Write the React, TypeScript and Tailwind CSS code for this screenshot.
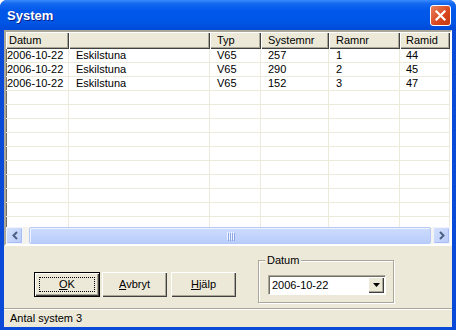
import React from 'react';

const FONT = { fontFamily: '"Liberation Sans", Arial, sans-serif' };

type Col = { title: string; w: string; pad: string };

const cols: Col[] = [
  { title: 'Datum', w: 'w-[63px]', pad: 'pl-[1px]' },
  { title: '', w: 'w-[141px]', pad: 'pl-[7px]' },
  { title: 'Typ', w: 'w-[51px]', pad: 'pl-[7px]' },
  { title: 'Systemnr', w: 'w-[68px]', pad: 'pl-[7px]' },
  { title: 'Ramnr', w: 'w-[71px]', pad: 'pl-[7px]' },
  { title: 'Ramid', w: 'w-[50px]', pad: 'pl-[6px]' },
];

const rows = [
  ['2006-10-22', 'Eskilstuna', 'V65', '257', '1', '44'],
  ['2006-10-22', 'Eskilstuna', 'V65', '290', '2', '45'],
  ['2006-10-22', 'Eskilstuna', 'V65', '152', '3', '47'],
];

const emptyRows = Array.from({ length: 10 }, () => ['', '', '', '', '', '']);

// classic raised 3D edge
const raised =
  'shadow-[inset_1px_1px_#ffffff,inset_-1px_-1px_#404040,inset_-2px_-2px_#aca899]';

const Chevron = ({ dir }: { dir: 'left' | 'right' }) => (
  <svg width="8" height="9" viewBox="0 0 8 9">
    <path
      d={dir === 'left' ? 'M6 1 L2.5 4.5 L6 8' : 'M2 1 L5.5 4.5 L2 8'}
      fill="none"
      stroke="#4d6185"
      strokeWidth="2"
    />
  </svg>
);

const ScrollButton = ({ dir }: { dir: 'left' | 'right' }) => (
  <div className="w-[17px] h-[17px] flex items-center justify-center rounded-[2px] border border-[#f0f4fd] bg-[linear-gradient(135deg,#d3e0fd,#b9cbf9)] shadow-[inset_-1px_-1px_#a8bdf3]">
    <Chevron dir={dir} />
  </div>
);

const Button = ({ label, def }: { label: React.ReactNode; def?: boolean }) => (
  <div
    className={`h-[25px] flex items-center justify-center text-[11px] text-black bg-[#ece9d8] ${
      def ? 'w-[66px] border border-black' : 'w-[65px]'
    }`}
  >
    <div className={`w-full h-full flex items-center justify-center ${raised}`}>
      {def ? (
        <div className="w-[56px] h-[15px] border border-dotted border-black flex items-center justify-center">
          {label}
        </div>
      ) : (
        label
      )}
    </div>
  </div>
);

export default function App() {
  return (
    <div className="w-[456px] h-[330px] bg-white" style={FONT}>
      <div className="w-full h-full flex flex-col rounded-t-[7px] overflow-hidden bg-[#0a4ad8]">
        {/* title bar */}
        <div className="h-[30px] shrink-0 flex items-center justify-between pl-[7px] pr-[5px] bg-[linear-gradient(to_bottom,#3b8bfb_0%,#1469f0_12%,#0058ea_35%,#0055e5_75%,#0049d8_100%)]">
          <span className="text-white font-bold text-[13px] [text-shadow:1px_1px_#0a1f8a] pt-[1px]">
            System
          </span>
          <div className="w-[21px] h-[21px] rounded-[3px] border border-white bg-[linear-gradient(135deg,#e8825d,#d8461d_60%,#c33a12)] flex items-center justify-center">
            <svg width="11" height="11" viewBox="0 0 11 11">
              <path d="M1.5 1.5 L9.5 9.5 M9.5 1.5 L1.5 9.5" stroke="#ffffff" strokeWidth="2.2" strokeLinecap="square" />
            </svg>
          </div>
        </div>

        {/* client */}
        <div className="flex-1 flex flex-col mx-[4px] mb-[3px] bg-[#ece9d8]">
          {/* list view */}
          <div className="h-[216px] shrink-0 flex flex-col border-2 border-t-[#aca899] border-l-[#aca899] border-r-[#ffffff] border-b-[#ffffff]">
            <div className="flex-1 flex flex-col bg-white shadow-[inset_1px_1px_#716f64] overflow-hidden">
              <div className="flex h-[17px] shrink-0">
                {cols.map((c, i) => (
                  <div
                    key={i}
                    className={`${c.w} h-full flex items-center text-[11px] text-black bg-[#ece9d8] ${raised} ${
                      i === 0 ? 'pl-[3px]' : c.pad
                    }`}
                  >
                    {c.title}
                  </div>
                ))}
              </div>
              <div className="flex-1 overflow-hidden">
                {[...rows, ...emptyRows].map((r, ri) => (
                  <div key={ri} className="flex h-[14px] border-b border-[#ebeadb]">
                    {r.map((cell, ci) => (
                      <div
                        key={ci}
                        className={`${cols[ci].w} h-full flex items-center text-[11px] leading-none text-black border-r border-[#ebeadb] ${cols[ci].pad}`}
                      >
                        {cell}
                      </div>
                    ))}
                  </div>
                ))}
              </div>
              {/* horizontal scrollbar */}
              <div className="h-[17px] shrink-0 flex bg-[#f4f3ee]">
                <ScrollButton dir="left" />
                <div className="flex-1 flex pl-[6px] pr-[2px]">
                  <div className="flex-1 h-[17px] rounded-[2px] border border-[#b5c9f8] bg-[linear-gradient(to_bottom,#cddcfe,#b9cdfb)] shadow-[inset_1px_1px_#eef3fe] flex items-center justify-center gap-[1px]">
                    {[0, 1, 2, 3].map((k) => (
                      <div key={k} className="w-[1px] h-[8px] bg-[#eef4ff] shadow-[1px_1px_#8ca6e8]" />
                    ))}
                  </div>
                </div>
                <ScrollButton dir="right" />
              </div>
            </div>
          </div>

          {/* buttons + group box */}
          <div className="h-[62px] shrink-0 flex">
            <div className="flex items-start pt-[26px] pl-[30px]">
              <Button
                def
                label={
                  <span>
                    <u>O</u>K
                  </span>
                }
              />
              <div className="w-[2px]" />
              <Button
                label={
                  <span>
                    <u>A</u>vbryt
                  </span>
                }
              />
              <div className="w-[4px]" />
              <Button
                label={
                  <span>
                    <u>H</u>jälp
                  </span>
                }
              />
            </div>
            <div className="ml-[22px] mt-[14px] w-[136px] h-[43px] relative border border-[#aca899] shadow-[inset_1px_1px_#ffffff,1px_1px_#ffffff]">
              <span className="absolute -top-[8px] left-[6px] px-[2px] bg-[#ece9d8] text-[11px] leading-[14px] text-black">
                Datum
              </span>
              <div className="mt-[14px] ml-[9px] w-[118px] h-[20px] flex border border-t-[#aca899] border-l-[#aca899] border-r-white border-b-white">
                <div className="flex-1 flex bg-white shadow-[inset_1px_1px_#716f64]">
                  <span className="flex-1 pl-[3px] pt-[1px] text-[11px] leading-[17px] text-black">2006-10-22</span>
                  <div className={`w-[16px] h-[16px] mt-[1px] mr-[1px] bg-[#ece9d8] flex items-center justify-center ${raised}`}>
                    <svg width="7" height="4" viewBox="0 0 7 4">
                      <path d="M0 0 H7 L3.5 4 Z" fill="#000000" />
                    </svg>
                  </div>
                </div>
              </div>
            </div>
          </div>

          {/* separator + status bar */}
          <div className="h-[2px] shrink-0 border-t border-[#aca899] border-b border-b-white" />
          <div className="flex-1 flex items-center pl-[6px] text-[11px] text-black">Antal system 3</div>
        </div>
      </div>
    </div>
  );
}
